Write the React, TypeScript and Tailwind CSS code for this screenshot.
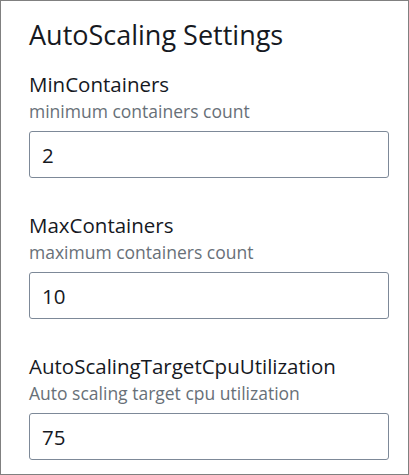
const fields = [
  { label: 'MinContainers', hint: 'minimum containers count', value: '2' },
  { label: 'MaxContainers', hint: 'maximum containers count', value: '10' },
  {
    label: 'AutoScalingTargetCpuUtilization',
    hint: 'Auto scaling target cpu utilization',
    value: '75',
  },
]

export default function App() {
  return (
    <div
      className="h-[475px] w-[409px] overflow-hidden border border-[#808080] bg-white pl-[28px] pr-[19px] pt-[18px]"
      style={{ fontFamily: '"Open Sans", "Noto Sans", sans-serif' }}
    >
      <h2 className="text-[27px] leading-[32px] text-[#16191f]">AutoScaling Settings</h2>

      <div className="mt-[20px] flex flex-col gap-[34px]">
        {fields.map((f) => (
          <div key={f.label} className="flex flex-col">
            <label className="text-[20.5px] leading-[26px] text-[#16191f]">{f.label}</label>
            <span className="mt-[3px] text-[17.5px] leading-[22px] text-[#687078]">{f.hint}</span>
            <input
              readOnly
              value={f.value}
              className="mt-[9px] h-[47px] w-full rounded-[3px] border border-[#7d8998] px-[12px] text-[20.5px] text-[#16191f] outline-none"
            />
          </div>
        ))}
      </div>
    </div>
  )
}
